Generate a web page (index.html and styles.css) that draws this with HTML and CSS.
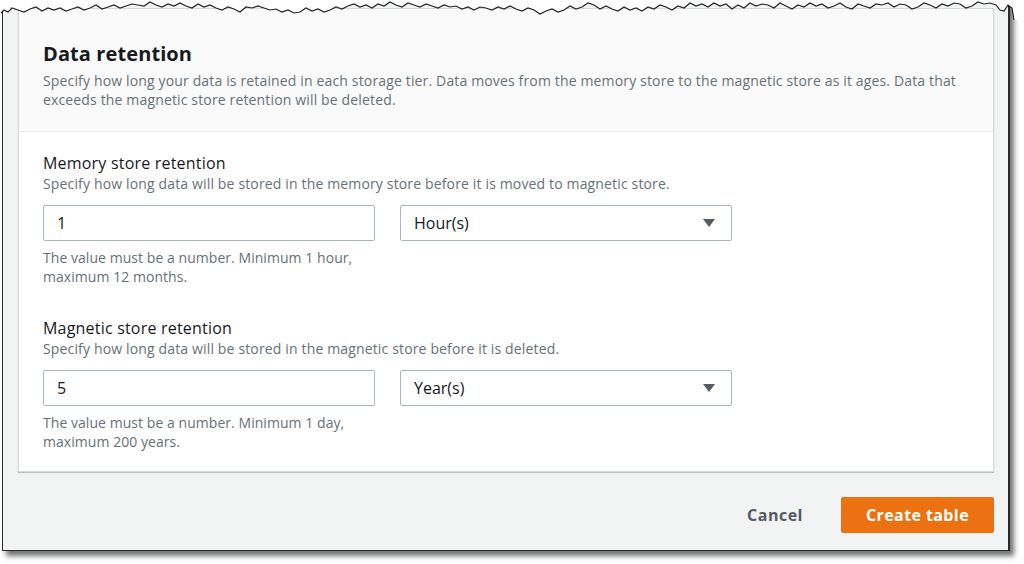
FILE: index.html
```html
<!DOCTYPE html>
<html>
<head>
<meta charset="utf-8">
<link rel="stylesheet" href="styles.css">
</head>
<body>
<div class="frame">
  <div class="card">
    <div class="card-header">
      <h2 class="title">Data retention</h2>
      <p class="desc">Specify how long your data is retained in each storage tier. Data moves from the memory store to the magnetic store as it ages. Data that exceeds the magnetic store retention will be deleted.</p>
    </div>
    <div class="card-body">
      <div class="field">
        <div class="label">Memory store retention</div>
        <div class="field-desc">Specify how long data will be stored in the memory store before it is moved to magnetic store.</div>
        <div class="controls">
          <div class="col">
            <div class="input">1</div>
            <div class="help">The value must be a number. Minimum 1 hour, maximum 12 months.</div>
          </div>
          <div class="col">
            <div class="select"><span>Hour(s)</span><svg class="caret" width="14" height="10" viewBox="0 0 14 10"><polygon points="1,1 13,1 7,9" fill="#545b64"/></svg></div>
          </div>
        </div>
      </div>
      <div class="field">
        <div class="label">Magnetic store retention</div>
        <div class="field-desc">Specify how long data will be stored in the magnetic store before it is deleted.</div>
        <div class="controls">
          <div class="col">
            <div class="input">5</div>
            <div class="help">The value must be a number. Minimum 1 day, maximum 200 years.</div>
          </div>
          <div class="col">
            <div class="select"><span>Year(s)</span><svg class="caret" width="14" height="10" viewBox="0 0 14 10"><polygon points="1,1 13,1 7,9" fill="#545b64"/></svg></div>
          </div>
        </div>
      </div>
    </div>
  </div>
  <div class="actions">
    <button class="btn-link">Cancel</button>
    <button class="btn-primary">Create table</button>
  </div>
  <svg class="torn" width="1024" height="20" viewBox="0 0 1024 20">
    <polygon fill="#ffffff" points="0,0 1024,0 1024,20 1014,20 1012,8 1008,5 1004,11 1000,10 996,5 990,3 984,4 978,2 972,6 966,8 960,4 954,3 948,6 942,4 936,8 930,5 924,3 918,7 912,9 906,5 900,4 894,7 888,3 882,5 876,4 870,8 864,6 858,4 852,9 846,7 840,3 834,6 828,8 822,4 816,6 810,3 804,7 798,5 792,9 786,6 780,3 774,8 768,5 762,4 756,6 750,3 744,8 738,5 732,9 726,4 720,6 714,3 708,7 702,4 696,6 690,3 684,8 678,6 672,10 666,7 660,5 654,9 648,7 642,11 636,8 630,10 624,7 618,11 612,9 606,6 600,9 594,5 588,3 582,7 576,9 570,6 564,10 558,12 552,9 546,11 540,14 534,10 528,8 522,11 516,9 510,6 504,9 498,7 492,10 486,8 480,7 474,10 468,7 462,9 456,6 450,7 444,5 438,8 432,6 426,4 420,7 414,5 408,3 402,7 396,5 390,2 384,6 378,4 372,8 366,5 360,7 354,4 348,6 342,9 336,7 330,10 324,12 318,9 312,11 306,8 300,12 294,13 288,10 282,12 276,9 270,10 264,8 258,6 252,8 246,7 240,12 234,9 228,7 222,10 216,8 210,5 204,7 198,4 192,8 186,6 180,3 174,6 168,4 162,7 156,5 150,2 144,6 138,5 132,4 126,6 120,8 114,5 108,7 102,9 96,5 90,8 84,10 78,7 72,9 66,11 60,8 54,10 48,8 42,11 36,7 30,9 24,12 18,10 12,8 8,12 4,10 1,13 0,13"/>
    <polyline fill="none" stroke="#222" stroke-width="1.2" points="1014,20 1012,8 1008,5 1004,11 1000,10 996,5 990,3 984,4 978,2 972,6 966,8 960,4 954,3 948,6 942,4 936,8 930,5 924,3 918,7 912,9 906,5 900,4 894,7 888,3 882,5 876,4 870,8 864,6 858,4 852,9 846,7 840,3 834,6 828,8 822,4 816,6 810,3 804,7 798,5 792,9 786,6 780,3 774,8 768,5 762,4 756,6 750,3 744,8 738,5 732,9 726,4 720,6 714,3 708,7 702,4 696,6 690,3 684,8 678,6 672,10 666,7 660,5 654,9 648,7 642,11 636,8 630,10 624,7 618,11 612,9 606,6 600,9 594,5 588,3 582,7 576,9 570,6 564,10 558,12 552,9 546,11 540,14 534,10 528,8 522,11 516,9 510,6 504,9 498,7 492,10 486,8 480,7 474,10 468,7 462,9 456,6 450,7 444,5 438,8 432,6 426,4 420,7 414,5 408,3 402,7 396,5 390,2 384,6 378,4 372,8 366,5 360,7 354,4 348,6 342,9 336,7 330,10 324,12 318,9 312,11 306,8 300,12 294,13 288,10 282,12 276,9 270,10 264,8 258,6 252,8 246,7 240,12 234,9 228,7 222,10 216,8 210,5 204,7 198,4 192,8 186,6 180,3 174,6 168,4 162,7 156,5 150,2 144,6 138,5 132,4 126,6 120,8 114,5 108,7 102,9 96,5 90,8 84,10 78,7 72,9 66,11 60,8 54,10 48,8 42,11 36,7 30,9 24,12 18,10 12,8 8,12 4,10 1,13"/>
  </svg>
</div>
</body>
</html>
```

FILE: styles.css
```css
html, body {
  margin: 0;
  padding: 0;
  background: #ffffff;
}
body {
  font-family: "Open Sans", "Noto Sans", sans-serif;
  color: #16191f;
  width: 1024px;
  height: 564px;
  overflow: hidden;
}
.frame {
  position: relative;
  margin-left: 2px;
  width: 1005px;
  height: 542px;
  background: #f2f3f3;
  border-left: 1px solid #2a2a2a;
  border-right: 2px solid #2a2a2a;
  border-bottom: 1px solid #2a2a2a;
  box-shadow: 4px 5px 5px rgba(0,0,0,0.55);
  padding-top: 8px;
  box-sizing: content-box;
}
.torn {
  position: absolute;
  left: -3px;
  top: 0;
}
.card {
  margin-left: 15px;
  width: 974px;
  background: #ffffff;
  border: 1px solid #d5dbdb;
  box-shadow: 0 1px 1px rgba(0,0,0,0.2);
}
.card-header {
  background: #fafafa;
  border-bottom: 1px solid #eaeded;
  padding: 33px 24px 20px 24px;
  height: 69px;
}
.title {
  margin: 0;
  font-size: 20px;
  font-weight: 700;
  line-height: 24px;
  letter-spacing: 0.1px;
}
.desc {
  margin: 5px 0 0 0;
  font-size: 14px;
  line-height: 19px;
  color: #687078;
  letter-spacing: 0.15px;
}
.card-body {
  padding: 20px 24px 20px 24px;
}
.field + .field {
  margin-top: 31px;
}
.label {
  font-size: 16px;
  line-height: 22px;
  color: #16191f;
  letter-spacing: 0.2px;
}
.field-desc {
  font-size: 14px;
  line-height: 20px;
  color: #687078;
  letter-spacing: 0.15px;
}
.controls {
  display: flex;
  gap: 25px;
  margin-top: 11px;
}
.col {
  width: 332px;
}
.input, .select {
  box-sizing: border-box;
  height: 36px;
  border: 1px solid #aab7b8;
  border-radius: 2px;
  background: #ffffff;
  padding: 0 13px;
  font-size: 16px;
  line-height: 34px;
  color: #16191f;
}
.select {
  display: flex;
  justify-content: space-between;
  align-items: center;
  padding-right: 15px;
}
.caret {
  display: block;
}
.help {
  margin-top: 7px;
  font-size: 14px;
  line-height: 19px;
  color: #687078;
  letter-spacing: 0.05px;
  width: 330px;
}
.actions {
  display: flex;
  justify-content: flex-end;
  align-items: center;
  gap: 38px;
  margin-top: 25px;
  padding-right: 14px;
}
.btn-link {
  background: none;
  border: none;
  font-family: inherit;
  font-size: 16px;
  font-weight: 700;
  color: #545b64;
  padding: 0;
  letter-spacing: 0.5px;
}
.btn-primary {
  font-family: inherit;
  width: 153px;
  height: 36px;
  background: #ec7211;
  border: 1px solid #ec7211;
  border-radius: 2px;
  color: #ffffff;
  font-size: 16px;
  font-weight: 700;
  letter-spacing: 0.4px;
  padding: 0;
}
```
